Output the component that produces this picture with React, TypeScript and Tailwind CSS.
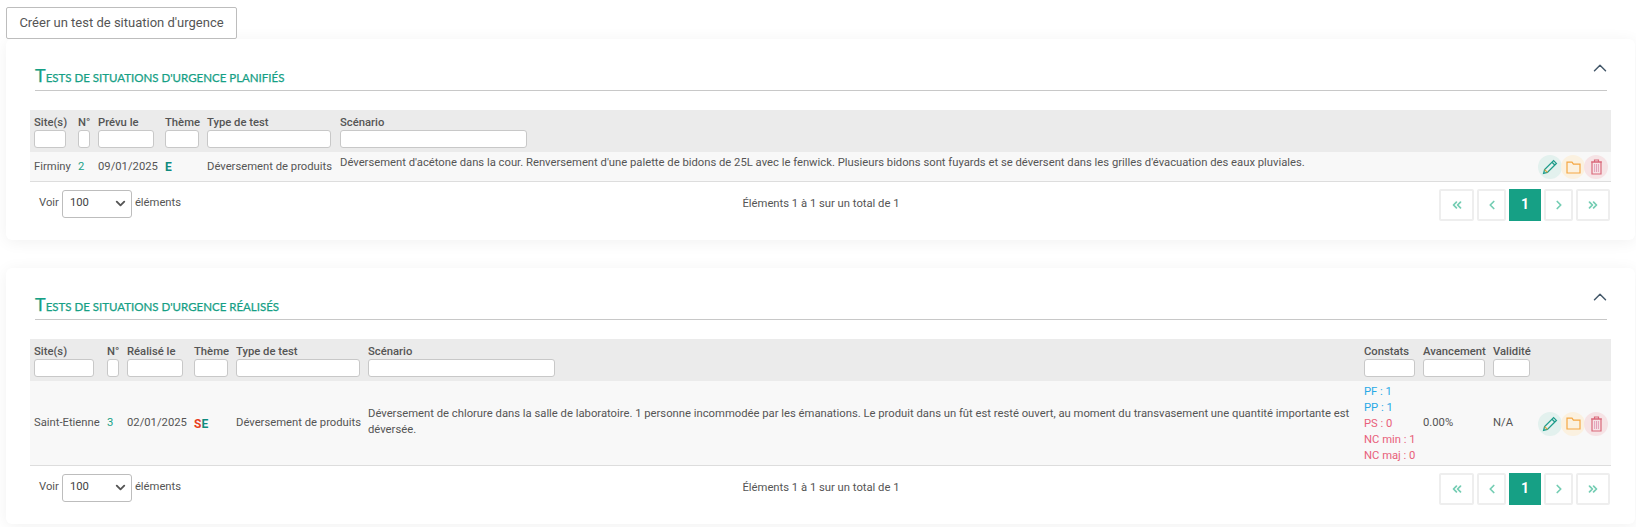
import React from 'react';
import { ChevronDown, ChevronLeft, ChevronRight, ChevronUp, ChevronsLeft, ChevronsRight } from 'lucide-react';

const FilterInput = ({ width }: { width: string }) => (
  <input className={`block h-[18px] ${width} rounded-[3px] border border-[#c8c8c8] bg-white`} />
);

const ActionButtons = () => (
  <div className="flex justify-end pr-[3px] pt-[2px]">
    <span className="flex h-6 w-6 items-center justify-center rounded-full bg-[#e3f1ee] text-[#1f9d8b]">
      <svg width="16" height="16" viewBox="0 0 16 16" fill="none" stroke="currentColor" strokeWidth="1.3">
        <path d="M11.6 1.6 14.4 4.4 5.4 13.4 1.6 14.4 2.6 10.6Z" />
        <path d="M10 3.2 12.8 6" />
        <path d="M2.6 10.6 5.4 13.4" stroke="#e0a63c" />
      </svg>
    </span>
    <span className="-ml-px flex h-6 w-6 items-center justify-center rounded-full bg-[#fbf1e0] text-[#f5a742]">
      <svg width="15" height="13" viewBox="0 0 15 13" fill="none" stroke="currentColor" strokeWidth="1.2">
        <path d="M1 1.2H6L7.4 3.2H14V12H1Z" />
      </svg>
    </span>
    <span className="-ml-px flex h-6 w-6 items-center justify-center rounded-full bg-[#f6e3e5] text-[#d9697a]">
      <svg width="13" height="16" viewBox="0 0 13 16" fill="none" stroke="currentColor" strokeWidth="1.2">
        <path d="M1 3H12M4.5 3V1H8.5V3" />
        <path d="M2 3V15H11V3Z" />
        <path d="M4.6 5V13M6.5 5V13M8.4 5V13" stroke="#e3a0b8" strokeWidth="1" />
      </svg>
    </span>
  </div>
);

const PageButton = ({ children, width, active }: { children: React.ReactNode; width: string; active?: boolean }) => (
  <span
    className={`flex h-8 ${width} items-center justify-center text-[14px] font-bold ${
      active ? 'bg-[#16a085] text-white' : 'rounded-[2px] border-2 border-[#eeeeee] text-[#74cdb3]'
    }`}
  >
    {children}
  </span>
);

const TableFooter = () => (
  <div className="grid grid-cols-[1fr_1fr_1fr] items-start pl-[33px] pr-[25px] pt-[7px]">
    <div className="flex items-center gap-[3px] pt-px">
      <span>Voir</span>
      <span className="flex h-7 w-[70px] items-center justify-between rounded-[3px] border border-[#bdbdbd] pl-[7px] pr-[3px] text-[#444]">
        100
        <ChevronDown size={15} strokeWidth={3} className="text-[#555]" />
      </span>
      <span>éléments</span>
    </div>
    <div className="pr-[7px] pt-[7px] text-center">Éléments 1 à 1 sur un total de 1</div>
    <div className="flex justify-end gap-[3px]">
      <PageButton width="w-[35px]"><ChevronsLeft size={14} strokeWidth={3} /></PageButton>
      <PageButton width="w-[29px]"><ChevronLeft size={14} strokeWidth={3} /></PageButton>
      <PageButton width="w-8" active>1</PageButton>
      <PageButton width="w-[29px]"><ChevronRight size={14} strokeWidth={3} /></PageButton>
      <PageButton width="w-[34px]"><ChevronsRight size={14} strokeWidth={3} /></PageButton>
    </div>
  </div>
);

const SectionTitle = ({ rest }: { rest: string }) => (
  <div className="relative ml-[29px] mr-[28px] border-b border-[#c8c8c8] pb-[3px] font-['Lato',sans-serif] text-[#16a085]">
    <h2 className="h-[24px] leading-[24px] [-webkit-text-stroke:0.25px_#16a085]">
      <span className="text-[18px]">T</span>
      <span className="text-[11.5px] uppercase">{rest}</span>
    </h2>
    <ChevronUp size={22} strokeWidth={1.6} className="absolute right-[-4px] top-[-6px] text-[#44586a]" />
  </div>
);

const th = 'p-0 pl-1 pt-[5px] pb-[4px] text-left align-top font-medium leading-[15px] text-[#555]';
const td = 'p-0 pl-1 pt-[2px] align-middle whitespace-nowrap';

const PlannedTable = () => (
  <table className="ml-[24px] mt-[19px] w-[1581px] table-fixed border-b border-[#dddddd]">
    <colgroup>
      <col className="w-[44px]" />
      <col className="w-[20px]" />
      <col className="w-[67px]" />
      <col className="w-[42px]" />
      <col className="w-[133px]" />
      <col />
      <col className="w-[80px]" />
    </colgroup>
    <thead className="bg-[#ebebeb]">
      <tr className="h-[42px]">
        <th className={th}>Site(s)<FilterInput width="w-[32px]" /></th>
        <th className={th}>N°<FilterInput width="w-[12px]" /></th>
        <th className={th}>Prévu le<FilterInput width="w-[56px]" /></th>
        <th className={th}>Thème<FilterInput width="w-[34px]" /></th>
        <th className={th}>Type de test<FilterInput width="w-[124px]" /></th>
        <th className={th}>Scénario<FilterInput width="w-[187px]" /></th>
        <th className={th}></th>
      </tr>
    </thead>
    <tbody className="bg-[#f8f8f8]">
      <tr className="h-[29px]">
        <td className={td}>Firminy</td>
        <td className={`${td} text-[#16a085]`}>2</td>
        <td className={td}>09/01/2025</td>
        <td className={`${td} text-[12px] font-bold text-[#0f8a7e]`}>E</td>
        <td className={td}>Déversement de produits</td>
        <td className={`${td} pb-[8px]`}>
          Déversement d'acétone dans la cour. Renversement d'une palette de bidons de 25L avec le fenwick. Plusieurs bidons sont fuyards et se déversent dans les grilles d'évacuation des eaux pluviales.
        </td>
        <td className="p-0 align-middle"><ActionButtons /></td>
      </tr>
    </tbody>
  </table>
);

const DoneTable = () => (
  <table className="ml-[24px] mt-[19px] w-[1581px] table-fixed border-b border-[#dddddd]">
    <colgroup>
      <col className="w-[73px]" />
      <col className="w-[20px]" />
      <col className="w-[67px]" />
      <col className="w-[42px]" />
      <col className="w-[132px]" />
      <col />
      <col className="w-[59px]" />
      <col className="w-[70px]" />
      <col className="w-[44px]" />
      <col className="w-[78px]" />
    </colgroup>
    <thead className="bg-[#ebebeb]">
      <tr className="h-[42px]">
        <th className={th}>Site(s)<FilterInput width="w-[60px]" /></th>
        <th className={th}>N°<FilterInput width="w-[12px]" /></th>
        <th className={th}>Réalisé le<FilterInput width="w-[56px]" /></th>
        <th className={th}>Thème<FilterInput width="w-[34px]" /></th>
        <th className={th}>Type de test<FilterInput width="w-[124px]" /></th>
        <th className={th}>Scénario<FilterInput width="w-[187px]" /></th>
        <th className={th}>Constats<FilterInput width="w-[51px]" /></th>
        <th className={th}>Avancement<FilterInput width="w-[62px]" /></th>
        <th className={th}>Validité<FilterInput width="w-[37px]" /></th>
        <th className={th}></th>
      </tr>
    </thead>
    <tbody className="bg-[#f8f8f8]">
      <tr className="h-[84px]">
        <td className={td}>Saint-Etienne</td>
        <td className={`${td} text-[#16a085]`}>3</td>
        <td className={td}>02/01/2025</td>
        <td className={`${td} text-[12px] font-bold`}><span className="text-[#e8401c]">S</span><span className="text-[#0f8a7e]">E</span></td>
        <td className={td}>Déversement de produits</td>
        <td className="p-0 pb-[2px] pl-1 pr-2 align-middle leading-[16px]">
          Déversement de chlorure dans la salle de laboratoire. 1 personne incommodée par les émanations. Le produit dans un fût est resté ouvert, au moment du transvasement une quantité importante est déversée.
        </td>
        <td className={`${td} leading-[16px]`}>
          <div className="text-[#29a9e6]">PF : 1</div>
          <div className="text-[#29a9e6]">PP : 1</div>
          <div className="text-[#e8607a]">PS : 0</div>
          <div className="text-[#e8607a]">NC min : 1</div>
          <div className="text-[#e8607a]">NC maj : 0</div>
        </td>
        <td className={td}>0.00%</td>
        <td className={td}>N/A</td>
        <td className="p-0 align-middle"><ActionButtons /></td>
      </tr>
    </tbody>
  </table>
);

export default function App() {
  return (
    <div className="h-[527px] overflow-hidden bg-white font-['Roboto',sans-serif] text-[11.25px] text-[#555]">
      <div className="pl-[6px] pt-[7px]">
        <button className="h-8 w-[231px] rounded-[2px] border border-[#bdbdbd] bg-white text-center text-[13px] text-[#555]">
          Créer un test de situation d'urgence
        </button>
      </div>
      <section className="ml-[6px] mr-px h-[201px] rounded-[6px] bg-white pt-[24px] shadow-[0_2px_16px_rgba(0,0,0,0.06)]">
        <SectionTitle rest="ests de situations d'urgence planifiés" />
        <PlannedTable />
        <TableFooter />
      </section>
      <section className="ml-[6px] mr-px mt-[28px] h-[256px] rounded-[6px] bg-white pt-[24px] shadow-[0_2px_16px_rgba(0,0,0,0.06)]">
        <SectionTitle rest="ests de situations d'urgence réalisés" />
        <DoneTable />
        <TableFooter />
      </section>
    </div>
  );
}
